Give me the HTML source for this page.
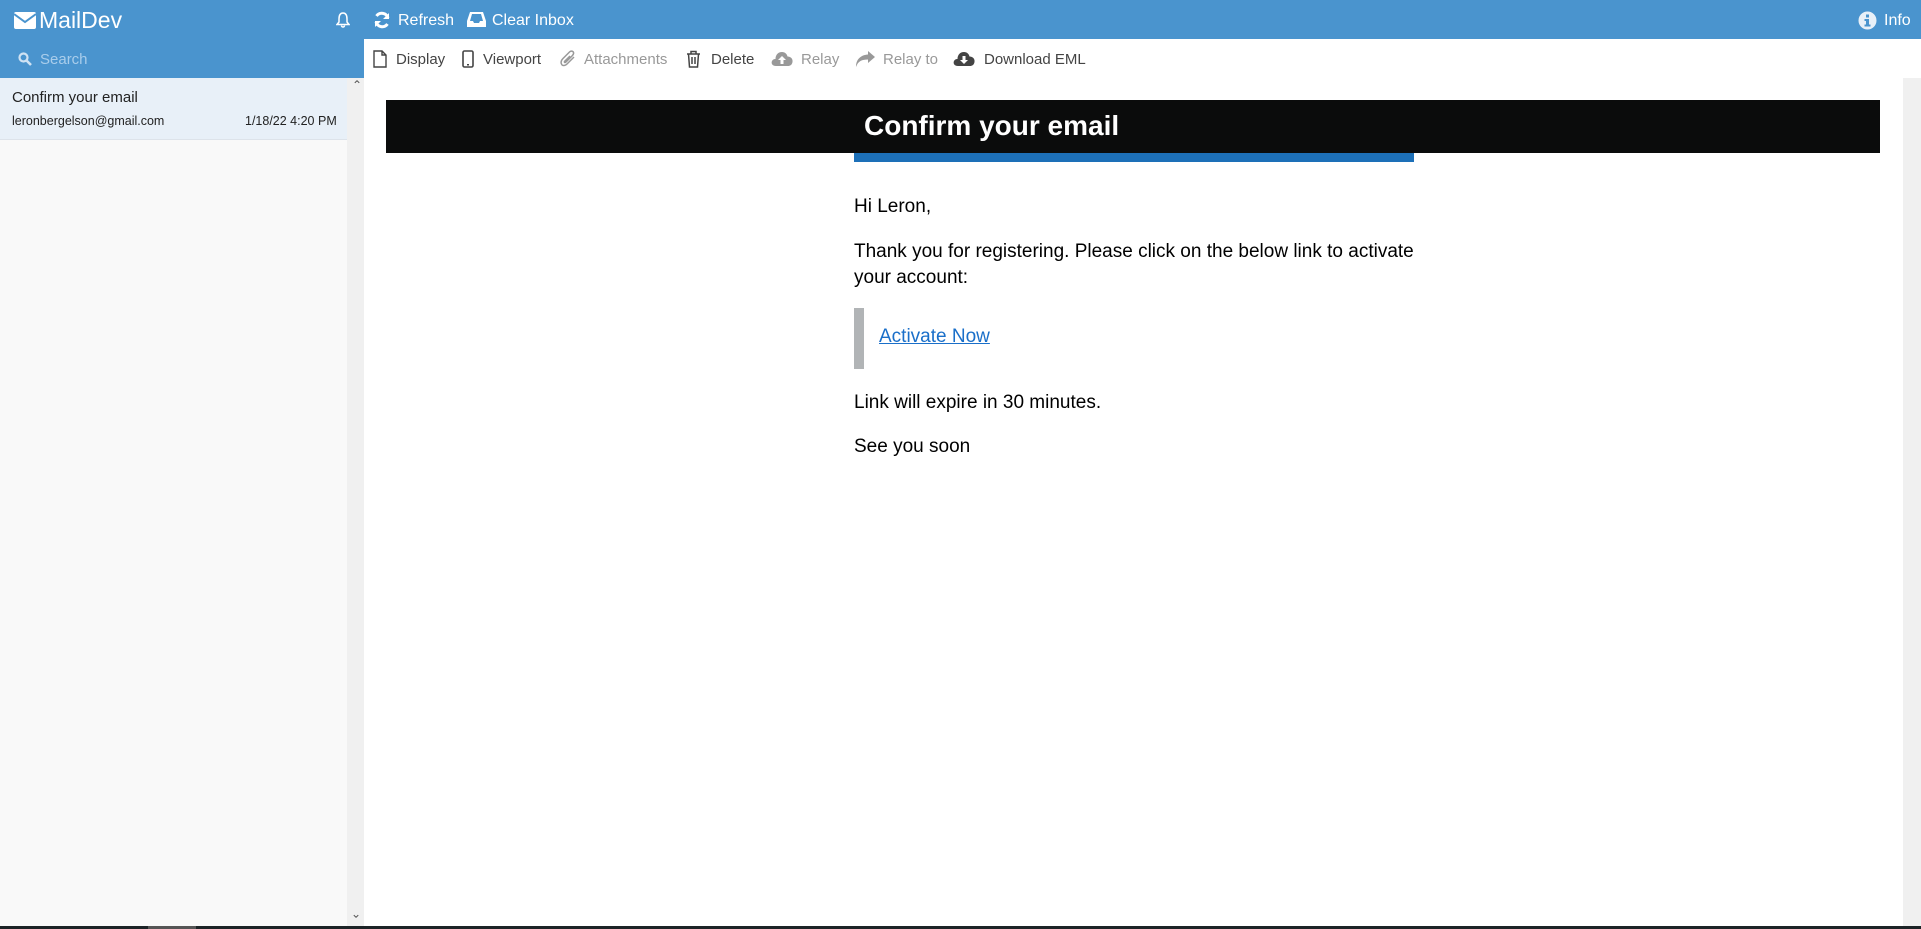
<!DOCTYPE html>
<html><head><meta charset="utf-8"><style>
*{margin:0;padding:0;box-sizing:border-box}
body{width:1921px;height:929px;overflow:hidden;background:#fff;font-family:"Liberation Sans",sans-serif;position:relative}
.a{position:absolute;white-space:nowrap}
.top{left:0;top:0;width:1921px;height:39px;background:#4a94ce}
.wt{color:#fff;font-size:16px}
.tb{color:#444;font-size:15px;top:51px}
.dim{color:#999}
.et{font-size:19px;color:#000}
</style></head><body>
<div class="a top"></div>
<div class="a" style="left:0;top:39px;width:364px;height:39px;background:#4a94ce"></div>
<div class="a" style="left:0;top:78px;width:347px;height:851px;background:#f9f9f9"></div>
<div class="a" style="left:0;top:78px;width:347px;height:62px;background:#e8f0f8;border-bottom:1px solid #dde3ea"></div>
<div class="a" style="left:347px;top:78px;width:17px;height:851px;background:#f0f0f0"></div>
<div class="a" style="left:352px;top:78px;font-size:12px;color:#555">&#8963;</div>
<div class="a" style="left:351px;top:906px;font-size:12px;color:#555;transform:scaleY(-1)">&#8963;</div>
<div class="a" style="left:1903px;top:78px;width:18px;height:851px;background:#f0f0f0"></div>
<div class="a" style="left:0;top:926px;width:1921px;height:3px;background:#1c2326"></div>
<div class="a" style="left:148px;top:926px;width:48px;height:3px;background:#555"></div>

<!-- top bar -->
<svg class="a" style="left:14px;top:12px" width="22" height="17" viewBox="0 0 22 17"><rect x="0" y="0" width="22" height="17" rx="2" fill="#fff"/><path d="M0 2 L11 10 L22 2" stroke="#4a94ce" stroke-width="2" fill="none"/></svg>
<div class="a" style="left:39px;top:7px;color:#fff;font-size:23px">MailDev</div>
<svg class="a" style="left:336px;top:12px" width="14" height="16" viewBox="0 0 14 16"><path d="M7 1 C3.5 1 3 4 3 7 L3 10 L1 12.5 L13 12.5 L11 10 L11 7 C11 4 10.5 1 7 1Z M5.5 13.5 a1.5 1.5 0 0 0 3 0" stroke="#fff" stroke-width="1.5" fill="none"/></svg>
<svg class="a" style="left:373px;top:11px" width="18" height="18" viewBox="0 0 18 18"><path d="M15 7 A6.5 6.5 0 0 0 3.5 5 M3 11 A6.5 6.5 0 0 0 14.5 13" stroke="#fff" stroke-width="3" fill="none"/><path d="M16 2 L16 8 L10 8Z M2 16 L2 10 L8 10Z" fill="#fff"/></svg>
<div class="a wt" style="left:398px;top:12px">Refresh</div>
<svg class="a" style="left:467px;top:11px" width="19" height="17" viewBox="0 0 19 17"><path d="M3 1 L16 1 L19 10 L19 16 L0 16 L0 10Z" fill="#fff"/><path d="M3 10 L6 10 L7 12 L12 12 L13 10 L16 10 L14 3 L5 3Z" fill="#4a94ce"/></svg>
<div class="a wt" style="left:492px;top:12px">Clear Inbox</div>
<svg class="a" style="left:1858px;top:11px" width="19" height="19" viewBox="0 0 19 19"><circle cx="9.5" cy="9.5" r="9" fill="#e8f0f8"/><rect x="8" y="3.5" width="3" height="3" fill="#4a94ce"/><path d="M6.5 8 L11 8 L11 13.5 L12.5 13.5 L12.5 15.5 L6.5 15.5 L6.5 13.5 L8 13.5 L8 10 L6.5 10Z" fill="#4a94ce"/></svg>
<div class="a wt" style="left:1884px;top:12px">Info</div>

<!-- search -->
<svg class="a" style="left:18px;top:52px" width="14" height="14" viewBox="0 0 14 14"><circle cx="5.5" cy="5.5" r="4" stroke="#cfe2f3" stroke-width="2.2" fill="none"/><path d="M8.5 8.5 L13 13" stroke="#cfe2f3" stroke-width="2.6"/></svg>
<div class="a" style="left:40px;top:51px;color:#a9cdeb;font-size:15px">Search</div>

<!-- list item -->
<div class="a" style="left:12px;top:89px;color:#222;font-size:15px">Confirm your email</div>
<div class="a" style="left:12px;top:114px;color:#222;font-size:12.5px">leronbergelson@gmail.com</div>
<div class="a" style="left:245px;top:114px;color:#222;font-size:12.5px">1/18/22 4:20 PM</div>

<!-- toolbar -->
<svg class="a" style="left:373px;top:50px" width="14" height="18" viewBox="0 0 14 18"><path d="M1 1 L9 1 L13 5 L13 17 L1 17Z M9 1 L9 5 L13 5" stroke="#444" stroke-width="1.4" fill="none"/></svg>
<div class="a tb" style="left:396px">Display</div>
<svg class="a" style="left:462px;top:50px" width="12" height="18" viewBox="0 0 12 18"><rect x="1" y="1" width="10" height="16" rx="1.5" stroke="#444" stroke-width="1.6" fill="none"/><rect x="5" y="14" width="2" height="1.5" fill="#444"/></svg>
<div class="a tb" style="left:483px">Viewport</div>
<svg class="a" style="left:560px;top:50px" width="17" height="18" viewBox="0 0 17 18"><path d="M14 7 L7 14 C5 16 2 16 1.5 14 C0.5 12 1 10.5 3 8.5 L9.5 2 C11 0.5 13 1 13.5 2.5 C14 4 13 5 12 6 L6 12 C5 13 4 12.5 4.5 11.5 L10 6" stroke="#999" stroke-width="1.5" fill="none"/></svg>
<div class="a tb dim" style="left:584px">Attachments</div>
<svg class="a" style="left:686px;top:50px" width="15" height="18" viewBox="0 0 15 18"><path d="M1 4 L14 4 M5 4 L5 1.5 L10 1.5 L10 4 M2.5 4 L3.5 17 L11.5 17 L12.5 4 M6 7 L6 14 M9 7 L9 14" stroke="#444" stroke-width="1.5" fill="none"/></svg>
<div class="a tb" style="left:711px">Delete</div>
<svg class="a" style="left:771px;top:51px" width="22" height="16" viewBox="0 0 22 16"><path d="M5 15 C1 15 0 12 1 10 C2 8 4 8 4.5 8 C4.5 4 7 1 11 1 C14 1 16 3 16.5 5.5 C20 5.5 22 8 21.5 11 C21 14 19 15 17 15Z" fill="#999"/><path d="M11 5 L7 9 L9.5 9 L9.5 13 L12.5 13 L12.5 9 L15 9Z" fill="#fff"/></svg>
<div class="a tb dim" style="left:801px">Relay</div>
<svg class="a" style="left:855px;top:50px" width="21" height="18" viewBox="0 0 21 18"><path d="M13 1 L20 7 L13 13 L13 9.5 C7 9.5 3 11 1 17 C1 9 6 5 13 4.5Z" fill="#999"/></svg>
<div class="a tb dim" style="left:883px">Relay to</div>
<svg class="a" style="left:953px;top:51px" width="22" height="16" viewBox="0 0 22 16"><path d="M5 15 C1 15 0 12 1 10 C2 8 4 8 4.5 8 C4.5 4 7 1 11 1 C14 1 16 3 16.5 5.5 C20 5.5 22 8 21.5 11 C21 14 19 15 17 15Z" fill="#444"/><path d="M11 13 L7 9 L9.5 9 L9.5 5 L12.5 5 L12.5 9 L15 9Z" fill="#fff"/></svg>
<div class="a tb" style="left:984px">Download EML</div>

<!-- email -->
<div class="a" style="left:386px;top:100px;width:1494px;height:53px;background:#0b0c0c"></div>
<div class="a" style="left:864px;top:110px;color:#fff;font-size:28px;font-weight:bold">Confirm your email</div>
<div class="a" style="left:854px;top:153px;width:560px;height:9px;background:#1d70b8"></div>
<div class="a et" style="left:854px;top:196px">Hi Leron,</div>
<div class="a et" style="left:854px;top:241px">Thank you for registering. Please click on the below link to activate</div>
<div class="a et" style="left:854px;top:267px">your account:</div>
<div class="a" style="left:854px;top:308px;width:10px;height:61px;background:#b1b4b6"></div>
<div class="a et" style="left:879px;top:326px;color:#1a6fc9;text-decoration:underline">Activate Now</div>
<div class="a et" style="left:854px;top:392px">Link will expire in 30 minutes.</div>
<div class="a et" style="left:854px;top:436px">See you soon</div>
</body></html>
